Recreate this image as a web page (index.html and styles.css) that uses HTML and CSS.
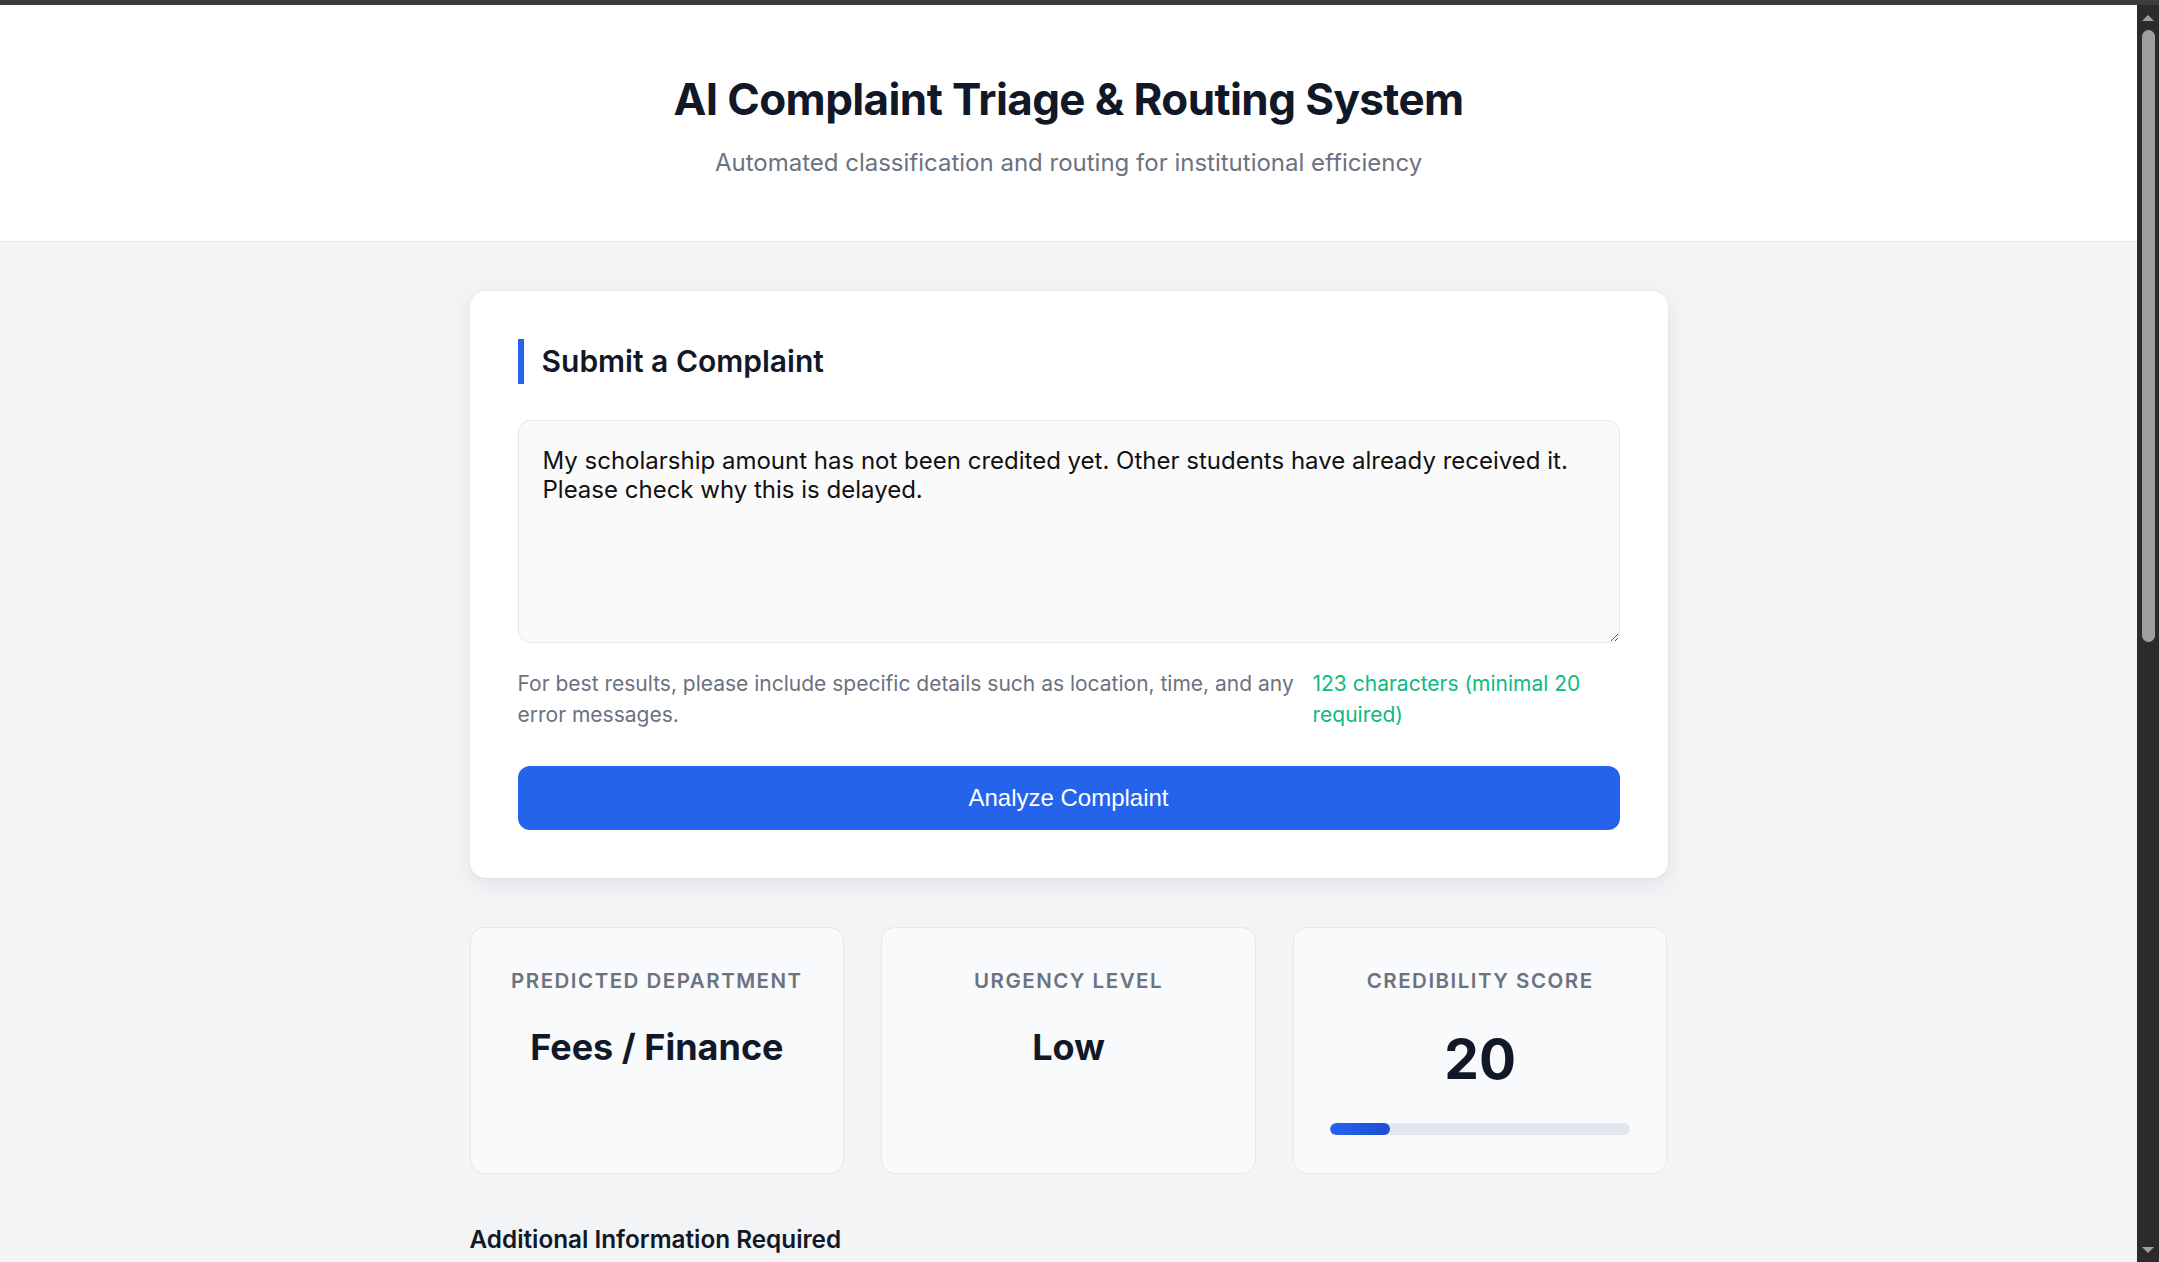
FILE: index.html
```html
<!DOCTYPE html>
<html lang="en">
<head>
<meta charset="utf-8">
<title>AI Complaint Triage &amp; Routing System</title>
<link rel="stylesheet" href="styles.css">
</head>
<body>
<div class="window">
  <div class="window-strip"></div>
  <div class="window-body">
    <div class="page">
      <header class="site-header">
        <h1 class="site-title">AI Complaint Triage &amp; Routing System</h1>
        <p class="site-subtitle">Automated classification and routing for institutional efficiency</p>
      </header>

      <main class="container">
        <section class="card">
          <h2 class="card-title">Submit a Complaint</h2>
          <textarea class="complaint-input">My scholarship amount has not been credited yet. Other students have already received it. Please check why this is delayed.</textarea>
          <div class="help-row">
            <p class="help-text">For best results, please include specific details such as location, time, and any error messages.</p>
            <p class="char-count">123 characters (minimal 20 required)</p>
          </div>
          <button class="analyze-btn" type="button">Analyze Complaint</button>
        </section>

        <section class="stats">
          <div class="stat-card">
            <div class="stat-label">Predicted Department</div>
            <div class="stat-value">Fees / Finance</div>
          </div>
          <div class="stat-card">
            <div class="stat-label">Urgency Level</div>
            <div class="stat-value">Low</div>
          </div>
          <div class="stat-card">
            <div class="stat-label">Credibility Score</div>
            <div class="stat-value stat-score">20</div>
            <div class="score-track"><div class="score-fill" style="width:20%"></div></div>
          </div>
        </section>

        <section class="extra">
          <h3 class="extra-title">Additional Information Required</h3>
        </section>
      </main>
    </div>

    <div class="scrollbar" aria-hidden="true">
      <div class="scroll-btn"><span class="arrow-up"></span></div>
      <div class="scroll-track"><div class="scroll-thumb"></div></div>
      <div class="scroll-btn"><span class="arrow-down"></span></div>
    </div>
  </div>
</div>
</body>
</html>
```
FILE: styles.css
```css
* { box-sizing: border-box; }

html, body {
  margin: 0;
  padding: 0;
  height: 100%;
}

body {
  font-family: Inter, "Noto Sans", sans-serif;
  color: #111827;
  background: #f3f4f6;
  overflow: hidden;
}

/* Window frame: top strip + page + scrollbar */
.window {
  display: flex;
  flex-direction: column;
  height: 100vh;
}
.window-strip {
  flex: 0 0 5px;
  background: #3c3c3c;
}
.window-body {
  flex: 1 1 auto;
  display: flex;
  min-height: 0;
}
.page {
  flex: 1 1 auto;
  min-width: 0;
  overflow: hidden;
  background: #f3f4f6;
}

.scrollbar {
  flex: 0 0 22px;
  display: flex;
  flex-direction: column;
  background: #2b2b2b;
}
.scroll-btn {
  flex: 0 0 25px;
  display: flex;
  align-items: center;
  justify-content: center;
}
.arrow-up {
  width: 0;
  height: 0;
  border-left: 6px solid transparent;
  border-right: 6px solid transparent;
  border-bottom: 6px solid #9f9f9f;
}
.arrow-down {
  width: 0;
  height: 0;
  border-left: 6px solid transparent;
  border-right: 6px solid transparent;
  border-top: 6px solid #9f9f9f;
}
.scroll-track {
  flex: 1 1 auto;
  display: flex;
  flex-direction: column;
}
.scroll-thumb {
  height: 612px;
  margin: 0 4px 0 5px;
  border-radius: 7px;
  background: #9f9f9f;
}

/* Header */
.site-header {
  background: #ffffff;
  border-bottom: 1px solid #e5e7eb;
  text-align: center;
  padding: 68px 20px 64px;
}
.site-title {
  margin: 0;
  font-size: 44px;
  line-height: 53px;
  font-weight: 700;
  color: #111827;
  letter-spacing: -0.6px;
}
.site-subtitle {
  margin: 22px 0 0;
  font-size: 24px;
  line-height: 29px;
  color: #6b7280;
}

/* Layout */
.container {
  max-width: 1198px;
  margin: 0 auto;
  padding-top: 49px;
}

.card {
  background: #ffffff;
  border-radius: 16px;
  padding: 48px;
  box-shadow: 0 6px 22px rgba(17, 24, 39, 0.08), 0 1px 3px rgba(17, 24, 39, 0.04);
}

.card-title {
  margin: 0 0 36px;
  font-size: 30px;
  line-height: 45px;
  font-weight: 600;
  color: #111827;
  border-left: 6px solid #2563eb;
  padding-left: 18px;
}

.complaint-input {
  display: block;
  width: 100%;
  height: 223px;
  padding: 25px 23px 20px 24px;
  font-family: Inter, "Noto Sans", sans-serif;
  font-size: 24px;
  line-height: normal;
  color: #111111;
  background: #fafafa;
  border: 1px solid #e5e7eb;
  border-radius: 12px;
  resize: vertical;
  outline: none;
}

.help-row {
  display: flex;
  justify-content: space-between;
  gap: 14px;
  margin-top: 25px;
  font-size: 21px;
  line-height: 31.4px;
}
.help-text {
  margin: 0;
  flex: 1 1 auto;
  color: #6b7280;
}
.char-count {
  margin: 0;
  flex: 0 0 307px;
  color: #10b981;
}

.analyze-btn {
  display: block;
  width: 100%;
  height: 64px;
  margin-top: 35px;
  border: none;
  border-radius: 12px;
  background: #2563eb;
  color: #ffffff;
  font-family: "Liberation Sans", Arial, sans-serif;
  font-size: 24px;
  cursor: pointer;
}

/* Result cards */
.stats {
  display: grid;
  grid-template-columns: repeat(3, 1fr);
  gap: 37px;
  margin-top: 49px;
}
.stat-card {
  background: #f8fafc;
  border: 1px solid #e5e7eb;
  border-radius: 14px;
  padding: 40px 36px 38px;
  text-align: center;
}
.stat-label {
  font-size: 20.5px;
  line-height: 25px;
  font-weight: 600;
  letter-spacing: 1.5px;
  text-transform: uppercase;
  color: #6b7280;
  margin-bottom: 33px;
}
.stat-value {
  font-size: 36px;
  line-height: 43px;
  font-weight: 700;
  color: #111827;
}
.stat-score {
  font-size: 55px;
  line-height: 66px;
  margin-top: 3px;
}
.score-track {
  margin-top: 31px;
  height: 12px;
  border-radius: 6px;
  background: #e2e8f0;
  overflow: hidden;
}
.score-fill {
  height: 100%;
  border-radius: 6px;
  background: linear-gradient(90deg, #2563eb, #1d4ed8);
}

/* Additional info */
.extra {
  margin-top: 51px;
}
.extra-title {
  margin: 0;
  font-size: 24.3px;
  line-height: 29px;
  font-weight: 600;
  color: #111827;
}
```
